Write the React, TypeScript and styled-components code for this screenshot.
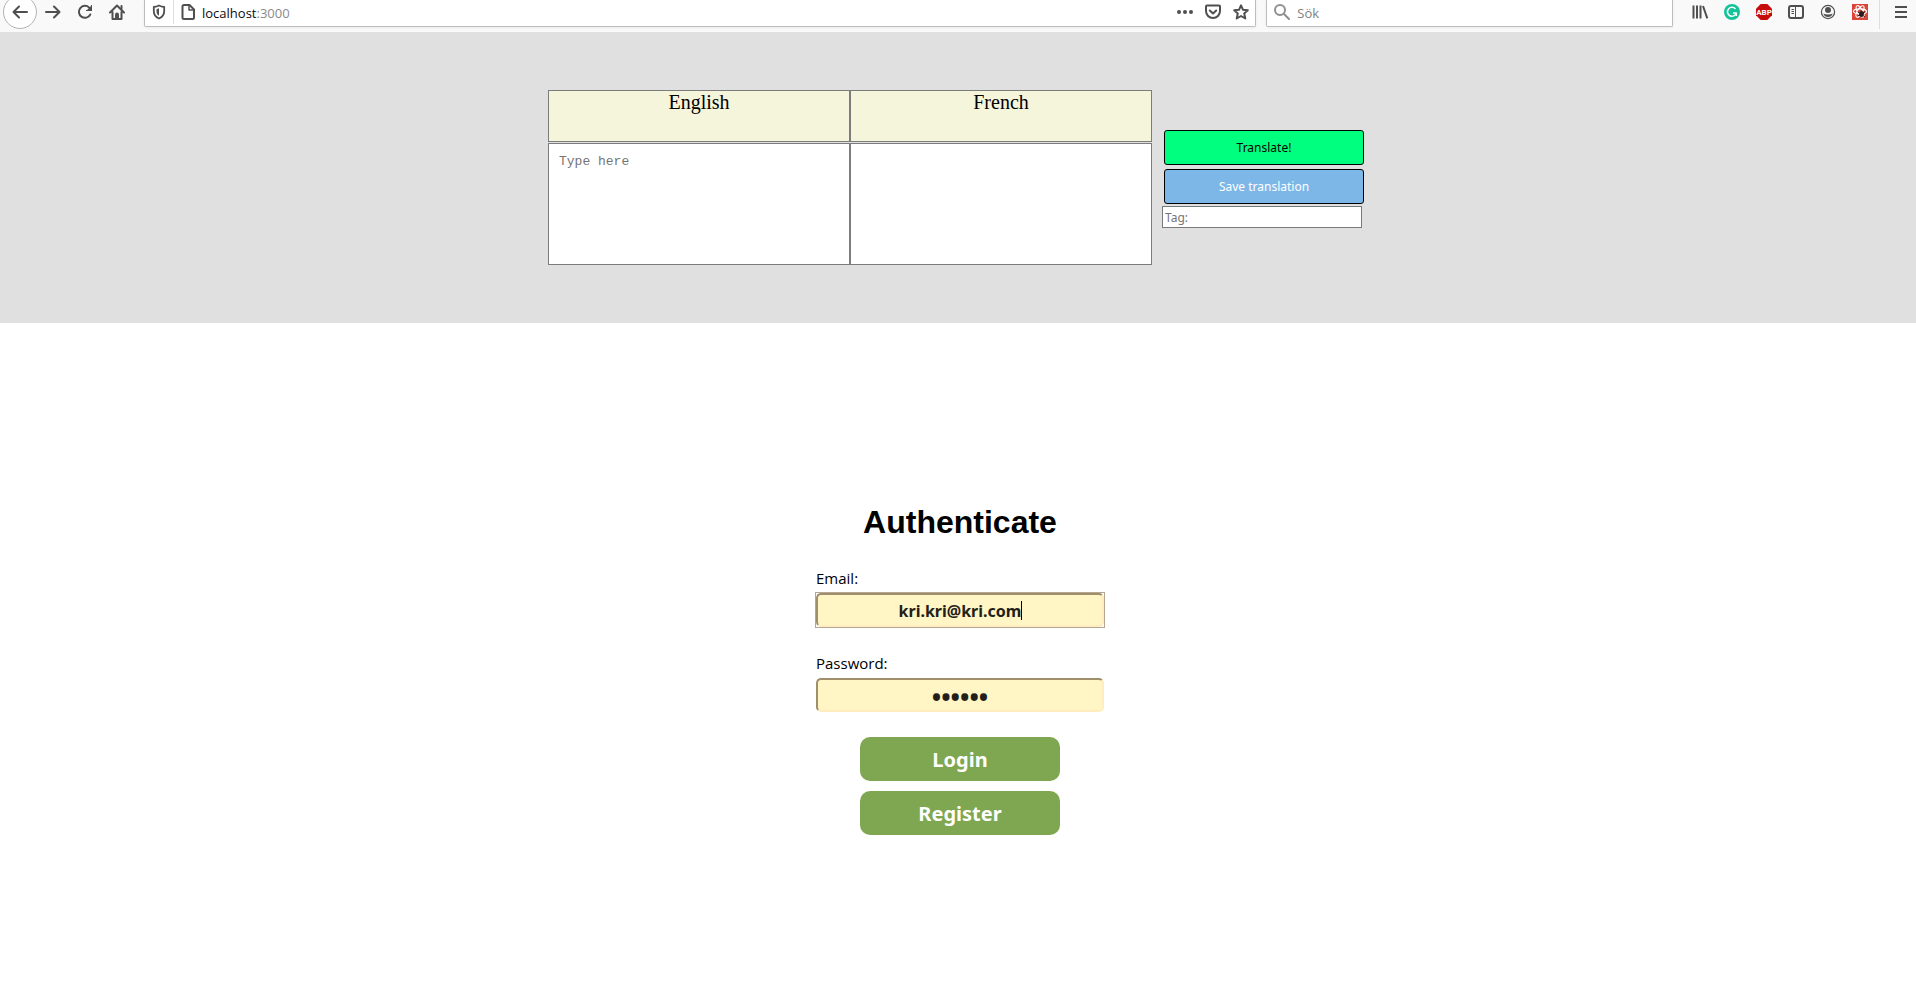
import React from 'react';
import styled, { createGlobalStyle } from 'styled-components';

const uiFont = '"Open Sans", "Noto Sans", sans-serif';
const controlFont = '"Noto Sans", "Open Sans", sans-serif';

const GlobalStyle = createGlobalStyle`
  *, *::before, *::after { box-sizing: border-box; }
  body { margin: 0; background: #fff; color: #000; font-family: ${uiFont}; }
  button, input, textarea { margin: 0; }
`;

const Toolbar = styled.header`
  display: flex;
  align-items: flex-start;
  height: 32px;
  padding-left: 3px;
  overflow: hidden;
  background: #f9f9fa;
`;

const NavGroup = styled.nav`
  display: flex;
  margin-right: 11px;
`;

const IconButton = styled.button<{ $width?: number }>`
  display: flex;
  align-items: center;
  justify-content: center;
  flex: none;
  width: ${({ $width = 32 }) => $width}px;
  height: 24px;
  padding: 0;
  border: 0;
  background: transparent;
  color: #4f4f50;
  svg { display: block; overflow: visible; }
`;

const Field = styled.div<{ $grow: number }>`
  display: flex;
  align-items: center;
  flex: ${({ $grow }) => $grow} 1 0;
  min-width: 0;
  height: 27px;
  padding-bottom: 3px;
  border: 1px solid #bdbdbd;
  border-top: 0;
  border-radius: 0 0 2px 2px;
  background: #fff;
  box-shadow: 0 1px 3px rgba(0, 0, 0, 0.06);
`;

const SearchField = styled(Field)`
  margin-left: 10px;
`;

const Divider = styled.span`
  flex: none;
  width: 1px;
  height: 24px;
  background: #dededf;
`;

const MenuDivider = styled(Divider)`
  height: 29px;
  margin-right: 6px;
`;

const Address = styled.a`
  flex: 1;
  padding-top: 3px;
  font: 13px/20px ${uiFont};
  color: #8a8a8a;
  text-decoration: none;
  strong { font-weight: 400; color: #0c0c0d; }
`;

const SearchInput = styled.input`
  flex: 1;
  min-width: 0;
  padding: 3px 0 0;
  border: 0;
  outline: 0;
  background: transparent;
  font: 13px/20px ${uiFont};
  &::placeholder { color: #808080; opacity: 1; }
`;

const Extensions = styled.div`
  display: flex;
  margin: 0 3px 0 11px;
`;

const Translator = styled.section`
  display: flex;
  justify-content: center;
  align-items: center;
  gap: 10px;
  padding: 58px 0;
  background: #e0e0e0;
`;

const Panes = styled.div`
  display: flex;
`;

const Pane = styled.div`
  display: flex;
  flex-direction: column;
  gap: 1px;
  width: 302px;
`;

const PaneTitle = styled.label`
  height: 52px;
  border: 1px solid #7c7c7c;
  background: #f5f5dc;
  font: 20px/22px "Liberation Serif", serif;
  text-align: center;
`;

const PaneText = styled.textarea`
  display: block;
  width: 100%;
  height: 122px;
  padding: 10px;
  border: 1px solid #7c7c7c;
  border-radius: 0;
  outline: 0;
  resize: none;
  background: #fff;
  font: 13px/16px "Liberation Mono", monospace;
  &::placeholder { color: #757575; opacity: 1; }
`;

const Actions = styled.div`
  display: flex;
  flex-direction: column;
  width: 206px;
`;

const ActionButton = styled.button<{ $primary?: boolean }>`
  width: 200px;
  height: 35px;
  margin: 2px;
  padding: 2px 0 0;
  border: 1px solid #000;
  border-radius: 3px;
  background: ${({ $primary }) => ($primary ? '#00ff7f' : '#7db7e8')};
  color: ${({ $primary }) => ($primary ? '#000' : '#fff')};
  font: 12px/16px ${controlFont};
`;

const TagInput = styled.input`
  width: 200px;
  height: 22px;
  padding: 2px 2px 0;
  border: 1px solid #7a7a7a;
  border-radius: 0;
  outline: 0;
  font: 12px/16px ${controlFont};
  &::placeholder { color: #757575; opacity: 1; }
`;

const AuthSection = styled.main`
  display: flex;
  flex-direction: column;
  align-items: center;
  padding: 181px 0 48px 4px;
`;

const Title = styled.h1`
  margin: 0 0 27px;
  font: bold 32px/36px "Liberation Sans", Arial, sans-serif;
`;

const Form = styled.form`
  display: flex;
  flex-direction: column;
  gap: 25px;
  width: 288px;
`;

const FormField = styled.div`
  display: flex;
  flex-direction: column;
  gap: 4px;
`;

const FieldLabel = styled.label`
  font: 15px/22px ${uiFont};
`;

const InputFrame = styled.div<{ $focused?: boolean }>`
  position: relative;
  outline: ${({ $focused }) => ($focused ? '1px solid #b5a68f' : 'none')};
`;

const FormInput = styled.input`
  display: block;
  width: 100%;
  height: 34px;
  padding: 2px 4px 0;
  border: 2px solid;
  border-color: #a08f6c #ffedbf #ffedbf #a08f6c;
  border-radius: 5px;
  outline: 0;
  background: #fff5c5;
  color: #221e18;
  font: bold 16px/24px ${controlFont};
  text-align: center;
  &[type='password'] { font-size: 25px; }
`;

const Caret = styled.span`
  position: absolute;
  top: 8px;
  left: calc(50% + 61px);
  width: 1px;
  height: 19px;
  background: #000;
`;

const Buttons = styled.div`
  display: flex;
  flex-direction: column;
  align-items: center;
  gap: 10px;
`;

const AuthButton = styled.button`
  width: 200px;
  height: 44px;
  padding: 2px 0 0;
  border: 0;
  border-radius: 10px;
  background: #7fa650;
  color: #fff;
  font: bold 20px/28px ${controlFont};
`;

const Icon = ({ children }: { children: React.ReactNode }) => (
  <svg width="16" height="16" viewBox="0 0 16 16" fill="none" stroke="currentColor"
    strokeWidth="2" strokeLinecap="round" strokeLinejoin="round" aria-hidden="true">
    {children}
  </svg>
);

export default function App() {
  return (
    <>
      <GlobalStyle />
      <Toolbar>
        <NavGroup>
          <IconButton $width={34} aria-label="Back">
            <Icon>
              <circle cx="8" cy="8" r="16.5" fill="#fff" stroke="#b4b4b5" strokeWidth="1" />
              <path d="M15 8H1.5M7 2.5L1.5 8L7 13.5" />
            </Icon>
          </IconButton>
          <IconButton aria-label="Forward">
            <Icon><path d="M1 8H14.5M9 2.5L14.5 8L9 13.5" /></Icon>
          </IconButton>
          <IconButton aria-label="Reload">
            <Icon>
              <path d="M12.2 3.6A6 6 0 1 0 13.3 10.5" />
              <path d="M15 1V7H9Z" fill="currentColor" stroke="none" />
              <path d="M14.5 1.5V6.5H9.5" strokeWidth="1" />
            </Icon>
          </IconButton>
          <IconButton aria-label="Home">
            <Icon>
              <path d="M1 8.5L8 1.5L15 8.5M3.5 8V15H12.5V8" />
              <path d="M12.5 2V5" />
              <path d="M6 14.5V10.5Q6 8.5 8 8.5T10 10.5V14.5Z" fill="currentColor" stroke="none" />
            </Icon>
          </IconButton>
        </NavGroup>

        <Field $grow={1114}>
          <IconButton $width={28} aria-label="Tracking protection">
            <Icon>
              <path d="M8 1.5C6 2.5 4.5 2.8 2.8 3V7C2.8 11 4.5 13 8 14.5C11.500 13 13.2 11 13.2 7V3C11.5 2.8 10 2.5 8 1.5Z" strokeWidth="1.800" />
              <path d="M8 4.3L5.5 5.2V7.5C5.5 9.5 6.3 10.8 8 11.7Z" fill="currentColor" stroke="none" />
            </Icon>
          </IconButton>
          <Divider />
          <IconButton $width={28} aria-label="Site information">
            <Icon>
              <path d="M4 1H9.5L14 5.5V13.5Q14 15 12.5 15H4Q2.5 15 2.5 13.5V2.5Q2.5 1 4 1Z" />
              <path d="M9 1.5V6H13.5" strokeWidth="1.5" />
            </Icon>
          </IconButton>
          <Address href="#"><strong>localhost</strong>:3000</Address>
          <IconButton $width={28} aria-label="Page actions">
            <Icon>
              <g fill="currentColor" stroke="none">
                <circle cx="2" cy="8" r="2" /><circle cx="8" cy="8" r="2" /><circle cx="14" cy="8" r="2" />
              </g>
            </Icon>
          </IconButton>
          <IconButton $width={28} aria-label="Save to Pocket">
            <Icon>
              <path d="M2 1.5H14Q15 1.5 15 2.5V7A7 7 0 0 1 1 7V2.5Q1 1.5 2 1.5Z" />
              <path d="M4.8 6.500L8 9.500L11.2 6.5" />
            </Icon>
          </IconButton>
          <IconButton $width={28} aria-label="Bookmark">
            <Icon>
              <path d="M8 1.300L10 5.800L14.800 6.300L11.200 9.500L12.300 14.500L8 12L3.700 14.500L4.800 9.500L1.200 6.300L6 5.800Z" />
            </Icon>
          </IconButton>
        </Field>

        <SearchField $grow={406}>
          <IconButton $width={30} aria-label="Search">
            <Icon>
              <g stroke="#8f8f90"><circle cx="6" cy="6" r="5" /><path d="M10 10L15 15" /></g>
            </Icon>
          </IconButton>
          <SearchInput aria-label="Search the web" placeholder="Sök" />
        </SearchField>

        <Extensions>
          <IconButton aria-label="Library">
            <Icon>
              <path d="M1.5 1.5V14.5M5 1.5V14.5M8.5 1.5V14.5M11 2L15.3 14.3" strokeLinecap="butt" />
            </Icon>
          </IconButton>
          <IconButton aria-label="Grammarly">
            <Icon>
              <circle cx="8" cy="8" r="8" fill="#15c39a" stroke="none" />
              <path d="M11.5 5A4.5 4.5 0 1 0 12.3 9H9M12.3 9V12" stroke="#fff" strokeWidth="1.5" strokeLinecap="butt" />
            </Icon>
          </IconButton>
          <IconButton aria-label="Adblock Plus">
            <Icon>
              <path d="M4.7 0H11.3L16 4.7V11.3L11.3 16H4.7L0 11.3V4.7Z" fill="#c70d0c" stroke="none" />
              <text x="8" y="11" fill="#fff" stroke="none" fontFamily="Roboto, sans-serif" fontWeight="700" fontSize="8" textAnchor="middle">ABP</text>
            </Icon>
          </IconButton>
          <IconButton aria-label="Sidebars">
            <Icon>
              <rect x="1" y="2" width="14" height="12" rx="2" />
              <path d="M7.5 2V14M3.5 5.5H6M3.5 7.5H6M3.5 9.5H6" strokeWidth="1" strokeLinecap="butt" />
            </Icon>
          </IconButton>
          <IconButton aria-label="Account">
            <Icon>
              <circle cx="8" cy="8" r="6.6" strokeWidth="1.200" />
              <circle cx="8" cy="6" r="3" fill="currentColor" stroke="none" />
              <path d="M3.3 9.5Q5 10.5 8 10.5T12.7 9.5Q11.5 13 8 13T3.3 9.5Z" fill="currentColor" stroke="none" />
            </Icon>
          </IconButton>
          <IconButton aria-label="React Developer Tools">
            <Icon>
              <path d="M0 0H16V16H0Z" fill="#d9453a" stroke="none" />
              <g stroke="#fff" strokeWidth="1.100">
                <ellipse cx="8" cy="7.5" rx="6.5" ry="2.6" />
                <ellipse cx="8" cy="7.5" rx="6.5" ry="2.6" transform="rotate(60 8 7.5)" />
                <ellipse cx="8" cy="7.5" rx="6.5" ry="2.6" transform="rotate(120 8 7.5)" />
              </g>
              <ellipse cx="9.5" cy="10" rx="2.3" ry="3" fill="#2b1b1a" stroke="none" transform="rotate(35 9.5 10)" />
              <path d="M6 8L12.5 12.5M6.5 11.5L12.5 8M9 6.5L10 13" stroke="#2b1b1a" strokeWidth="1" />
            </Icon>
          </IconButton>
        </Extensions>
        <MenuDivider />
        <IconButton $width={30} aria-label="Menu">
          <Icon><path d="M2 3H14M2 8H14M2 13H14" strokeLinecap="butt" /></Icon>
        </IconButton>
      </Toolbar>

      <Translator>
        <Panes>
          <Pane>
            <PaneTitle htmlFor="source">English</PaneTitle>
            <PaneText id="source" placeholder="Type here" />
          </Pane>
          <Pane>
            <PaneTitle htmlFor="target">French</PaneTitle>
            <PaneText id="target" readOnly />
          </Pane>
        </Panes>
        <Actions>
          <ActionButton $primary>Translate!</ActionButton>
          <ActionButton>Save translation</ActionButton>
          <TagInput aria-label="Tag" placeholder="Tag:" />
        </Actions>
      </Translator>

      <AuthSection>
        <Title>Authenticate</Title>
        <Form onSubmit={(event) => event.preventDefault()}>
          <FormField>
            <FieldLabel htmlFor="email">Email:</FieldLabel>
            <InputFrame $focused>
              <FormInput id="email" type="email" defaultValue="kri.kri@kri.com" />
              <Caret />
            </InputFrame>
          </FormField>
          <FormField>
            <FieldLabel htmlFor="password">Password:</FieldLabel>
            <InputFrame>
              <FormInput id="password" type="password" defaultValue="secret" />
            </InputFrame>
          </FormField>
          <Buttons>
            <AuthButton type="submit">Login</AuthButton>
            <AuthButton type="button">Register</AuthButton>
          </Buttons>
        </Form>
      </AuthSection>
    </>
  );
}
